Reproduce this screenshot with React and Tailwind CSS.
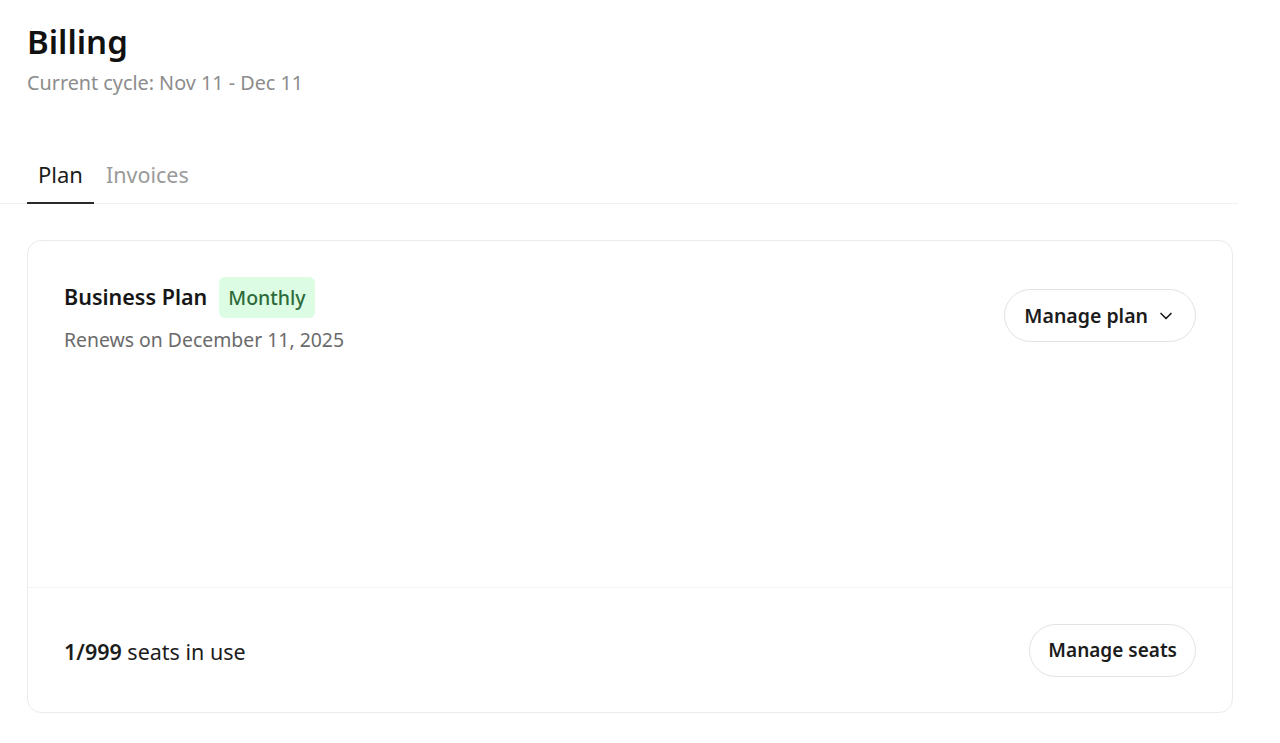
import React from "react";
import { ChevronDown } from "lucide-react";

const font = { fontFamily: '"Noto Sans", "Open Sans", sans-serif' };

function Tabs() {
  return (
    <div className="mt-[62px] flex border-b border-[#f0f0f0] mr-[42px]">
      <button className="ml-[27px] px-[11px] pb-[13px] text-[22px] text-[#1c1c1c] border-b-2 border-[#2a2a2a] -mb-px leading-[30px]">
        Plan
      </button>
      <button className="px-[12px] pb-[13px] text-[21.5px] text-[#9a9a9a] leading-[30px]">
        Invoices
      </button>
    </div>
  );
}

function PlanCard() {
  return (
    <div className="mx-[27px] mt-[36px] w-[1206px] rounded-[14px] border border-[#ebebeb] bg-white">
      <div className="flex items-start justify-between px-[36px] pt-[36px] h-[346px]">
        <div>
          <div className="flex items-center gap-[12px]">
            <span className="text-[21.5px] font-semibold text-[#161616]">Business Plan</span>
            <span className="rounded-[6px] bg-[#dcfce4] px-[9px] py-[6px] text-[19.5px] font-medium leading-[29px] text-[#2d6a3a]">
              Monthly
            </span>
          </div>
          <div className="mt-[7px] text-[19.4px] text-[#6b6b6b]">Renews on December 11, 2025</div>
        </div>
        <button className="mt-[12px] flex items-center gap-[8px] rounded-full border border-[#e2e2e2] px-[19px] h-[53px] text-[19.5px] font-semibold text-[#1c1c1c]">
          Manage plan
          <ChevronDown size={20} strokeWidth={2} />
        </button>
      </div>
      <div className="flex items-center justify-between border-t border-[#f3f3f3] px-[36px] h-[125px]">
        <div className="mt-[4px] text-[21.5px] text-[#1c1c1c]">
          <span className="font-semibold">1/999</span> seats in use
        </div>
        <button className="rounded-full border border-[#e2e2e2] px-[18px] h-[53px] text-[19px] font-semibold text-[#1c1c1c]">
          Manage seats
        </button>
      </div>
    </div>
  );
}

export default function App() {
  return (
    <div className="min-h-screen bg-white pt-[19px]" style={font}>
      <div className="px-[27px]">
        <h1 className="text-[33px] font-semibold leading-[46px] text-[#111]">Billing</h1>
        <p className="mt-[4px] text-[19.8px] text-[#8c8c8c] leading-[28px]">Current cycle: Nov 11 - Dec 11</p>
      </div>
      <Tabs />
      <PlanCard />
    </div>
  );
}
